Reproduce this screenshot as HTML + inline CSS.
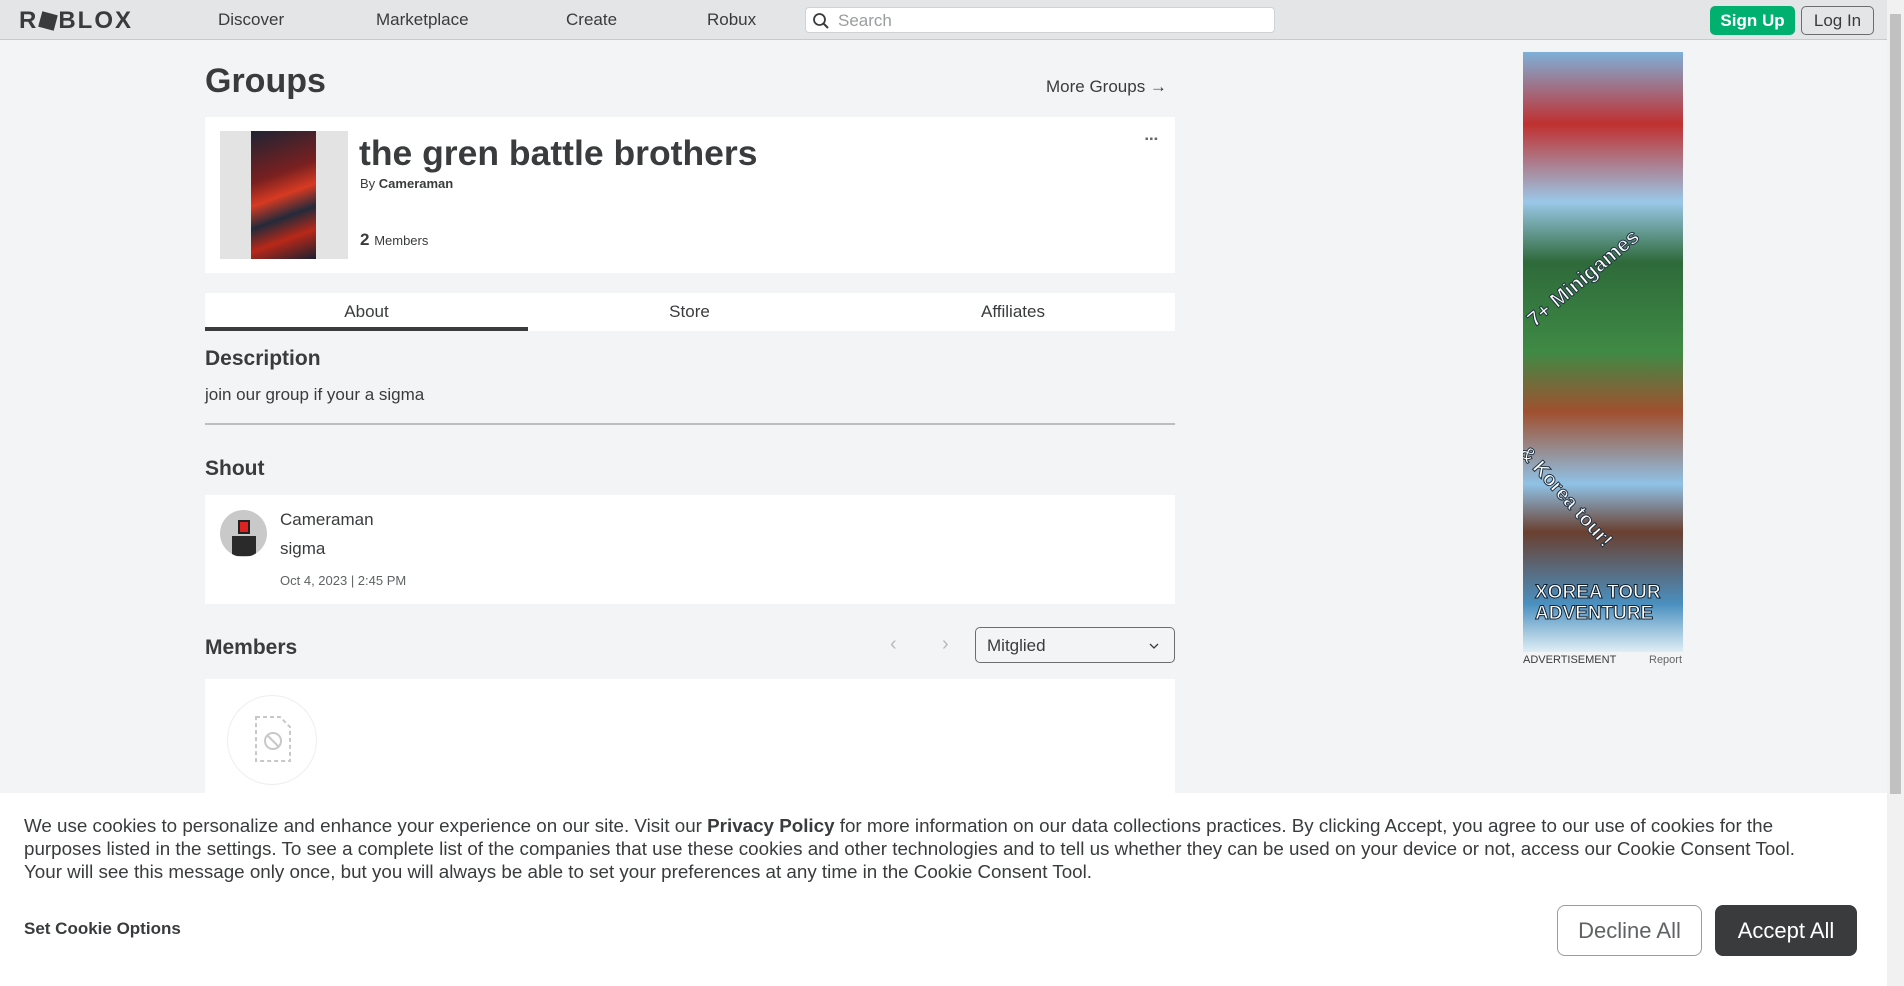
<!DOCTYPE html>
<html><head><meta charset="utf-8"><style>
*{box-sizing:border-box;margin:0;padding:0}
body{width:1904px;height:986px;overflow:hidden;background:#f2f4f5;font-family:"Liberation Sans",sans-serif;color:#393b3d;position:relative}
.abs{position:absolute}
.nav{left:0;top:0;width:1887px;height:40px;background:#e3e5e7;border-bottom:1px solid #c8cacc}
.nav .l{font-size:17px;color:#393b3d;top:10px}
.scroll{left:1887px;top:0;width:17px;height:986px;background:#f1f1f1}
.thumb{left:1890px;top:14px;width:11px;height:780px;background:#c1c1c1}
.card{background:#fff}
</style></head><body>
<div class="abs nav">
 <div class="abs" style="left:19px;top:7px;font-size:24px;font-weight:bold;letter-spacing:2px;color:#393b3d">R<span style="display:inline-block;width:16px;height:16px;background:#393b3d;transform:rotate(15deg);margin:0 2px;vertical-align:-1px"></span>BLOX</div>
 <div class="abs l" style="left:218px">Discover</div>
 <div class="abs l" style="left:376px">Marketplace</div>
 <div class="abs l" style="left:566px">Create</div>
 <div class="abs l" style="left:707px">Robux</div>
 <div class="abs" style="left:805px;top:7px;width:470px;height:26px;background:#fff;border-radius:4px;border:1px solid #d0d2d4">
  <svg class="abs" style="left:6px;top:4px" width="18" height="18" viewBox="0 0 18 18"><circle cx="7.5" cy="7.5" r="5.5" fill="none" stroke="#393b3d" stroke-width="1.8"/><path d="M11.5 11.5L16 16" stroke="#393b3d" stroke-width="2"/></svg>
  <div class="abs" style="left:32px;top:3px;font-size:17px;color:#9a9c9e">Search</div>
 </div>
 <div class="abs" style="left:1710px;top:6px;width:85px;height:29px;background:#00b06f;border-radius:5px;color:#fff;font-size:17px;font-weight:bold;text-align:center;line-height:29px">Sign Up</div>
 <div class="abs" style="left:1801px;top:6px;width:73px;height:29px;border:1px solid #6b6d6f;border-radius:5px;font-size:17px;text-align:center;line-height:27px">Log In</div>
</div>
<div class="abs scroll"></div><div class="abs thumb"></div>

<div class="abs" style="left:205px;top:62px;font-size:34px;font-weight:bold">Groups</div>
<div class="abs" style="left:1046px;top:77px;font-size:17px;color:#393b3d">More Groups →</div>

<div class="abs card" style="left:205px;top:117px;width:970px;height:156px">
 <div class="abs" style="left:15px;top:14px;width:128px;height:128px;background:#e3e3e3">
  <div class="abs" style="left:31px;top:0;width:65px;height:128px;background:linear-gradient(160deg,#1d2433 0%,#7a2020 35%,#d73a22 50%,#232a3a 65%,#b82818 80%,#1a2030 100%)"></div>
 </div>
 <div class="abs" style="left:154px;top:16px;font-size:35.5px;font-weight:bold;color:#393b3d">the gren battle brothers</div>
 <div class="abs" style="left:155px;top:59px;font-size:13px">By <b style="font-weight:600">Cameraman</b></div>
 <div class="abs" style="left:155px;top:113px;font-size:17px;font-weight:bold">2 <span style="font-size:13px;font-weight:normal">Members</span></div>
 <div class="abs" style="left:940px;top:17px;font-size:10px;letter-spacing:1px;color:#666">▪▪▪</div>
</div>

<div class="abs card" style="left:205px;top:293px;width:970px;height:38px">
 <div class="abs" style="left:0;width:323px;top:9px;text-align:center;font-size:17px">About</div>
 <div class="abs" style="left:323px;width:323px;top:9px;text-align:center;font-size:17px">Store</div>
 <div class="abs" style="left:646px;width:324px;top:9px;text-align:center;font-size:17px">Affiliates</div>
 <div class="abs" style="left:0;top:34px;width:323px;height:4px;background:#393b3d"></div>
</div>

<div class="abs" style="left:205px;top:347px;font-size:21px;font-weight:bold">Description</div>
<div class="abs" style="left:205px;top:385px;font-size:17px">join our group if your a sigma</div>
<div class="abs" style="left:205px;top:423px;width:970px;height:2px;background:#bdbebe"></div>

<div class="abs" style="left:205px;top:457px;font-size:21px;font-weight:bold">Shout</div>
<div class="abs card" style="left:205px;top:495px;width:970px;height:109px">
 <div class="abs" style="left:15px;top:15px;width:47px;height:47px;border-radius:50%;background:#c9c9c9;overflow:hidden">
  <div class="abs" style="left:18px;top:10px;width:12px;height:14px;background:#d22;border:2px solid #222"></div>
  <div class="abs" style="left:12px;top:26px;width:24px;height:20px;background:#2a2a2a"></div>
 </div>
 <div class="abs" style="left:75px;top:15px;font-size:17px">Cameraman</div>
 <div class="abs" style="left:75px;top:44px;font-size:17px">sigma</div>
 <div class="abs" style="left:75px;top:78px;font-size:13px;color:#606264">Oct 4, 2023 | 2:45 PM</div>
</div>

<div class="abs" style="left:205px;top:636px;font-size:21px;font-weight:bold">Members</div>
<div class="abs" style="left:890px;top:633px;font-size:20px;color:#b8babc">‹</div>
<div class="abs" style="left:942px;top:633px;font-size:20px;color:#b8babc">›</div>
<div class="abs" style="left:975px;top:627px;width:200px;height:36px;border:1px solid #6b6d6f;border-radius:5px;background:#f2f4f5">
 <div class="abs" style="left:11px;top:8px;font-size:17px">Mitglied</div>
 <svg class="abs" style="left:172px;top:14px" width="12" height="8" viewBox="0 0 12 8"><path d="M2 2l4 4 4-4" fill="none" stroke="#393b3d" stroke-width="1.3"/></svg>
</div>
<div class="abs card" style="left:205px;top:679px;width:970px;height:120px">
 <div class="abs" style="left:22px;top:16px;width:90px;height:90px;border-radius:50%;border:1px solid #eee"></div>
 <svg class="abs" style="left:49px;top:36px" width="38" height="48" viewBox="0 0 38 48"><path d="M2 2h24l10 10v34H2z" fill="none" stroke="#c8c8c8" stroke-width="2" stroke-dasharray="4 3"/><circle cx="19" cy="26" r="8" fill="none" stroke="#c8c8c8" stroke-width="2"/><path d="M13 20l12 12" stroke="#c8c8c8" stroke-width="2"/></svg>
</div>

<div class="abs" style="left:1523px;top:52px;width:160px;height:600px;background:linear-gradient(180deg,#7fb0d8 0%,#c03030 12%,#9ac8e8 25%,#2e6a3a 35%,#3f8a45 50%,#a05030 60%,#8fc2e6 72%,#6a4030 80%,#4a90c0 92%,#e0eef5 100%);overflow:hidden">
 <div class="abs" style="left:0;top:240px;white-space:nowrap;font-size:21px;font-weight:bold;color:#fff;transform:rotate(-40deg);transform-origin:left top;top:262px;-webkit-text-stroke:1px #234">7+ Minigames</div>
 <div class="abs" style="left:8px;top:390px;white-space:nowrap;font-size:20px;font-weight:bold;color:#fff;transform:rotate(48deg);transform-origin:left top;-webkit-text-stroke:1px #234">&amp; Korea tour!</div>
 <div class="abs" style="left:12px;top:530px;font-size:19px;font-weight:bold;color:#fff;line-height:21px;white-space:nowrap;-webkit-text-stroke:1px #123">XOREA TOUR<br>ADVENTURE</div>
</div>
<div class="abs" style="left:1523px;top:654px;font-size:11px">ADVERTISEMENT</div>
<div class="abs" style="left:1649px;top:654px;font-size:11px;color:#666">Report</div>

<div class="abs" style="left:0;top:793px;width:1887px;height:193px;background:#fff">
 <div class="abs" style="left:24px;top:21px;width:1795px;font-size:18.8px;line-height:23px;color:#393b3d">We use cookies to personalize and enhance your experience on our site. Visit our <b style="font-weight:600">Privacy Policy</b> for more information on our data collections practices. By clicking Accept, you agree to our use of cookies for the purposes listed in the settings. To see a complete list of the companies that use these cookies and other technologies and to tell us whether they can be used on your device or not, access our Cookie Consent Tool. Your will see this message only once, but you will always be able to set your preferences at any time in the Cookie Consent Tool.</div>
 <div class="abs" style="left:24px;top:126px;font-size:17px;font-weight:600">Set Cookie Options</div>
 <div class="abs" style="left:1557px;top:112px;width:145px;height:51px;border:1px solid #9a9c9e;border-radius:8px;text-align:center;line-height:49px;font-size:22px;color:#606264">Decline All</div>
 <div class="abs" style="left:1715px;top:112px;width:142px;height:51px;background:#393b3d;border-radius:8px;text-align:center;line-height:51px;font-size:22px;color:#fff">Accept All</div>
</div>
</body></html>
